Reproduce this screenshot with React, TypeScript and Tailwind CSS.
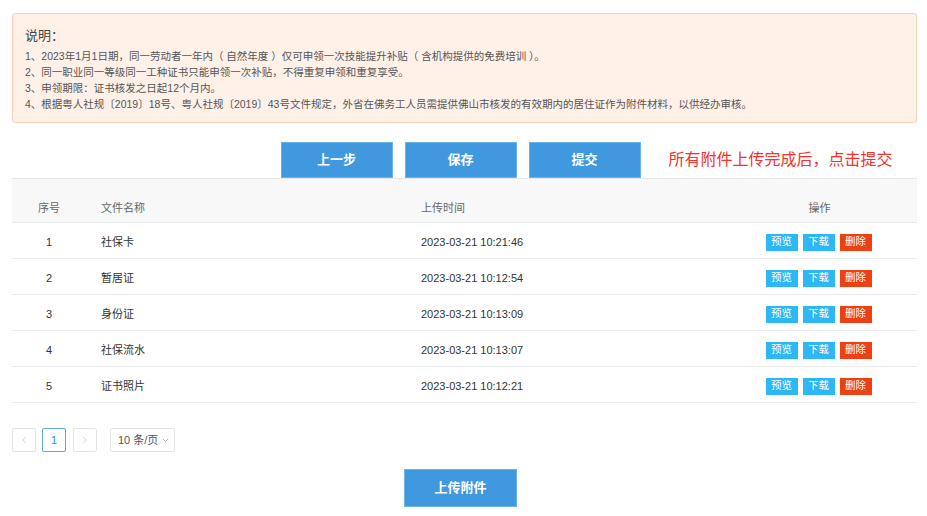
import { ChevronLeft, ChevronRight, ChevronDown } from "lucide-react";

type Arquivo = { id: number; nome: string; hora: string };

const arquivos: Arquivo[] = [
  { id: 1, nome: "社保卡", hora: "2023-03-21 10:21:46" },
  { id: 2, nome: "暂居证", hora: "2023-03-21 10:12:54" },
  { id: 3, nome: "身份证", hora: "2023-03-21 10:13:09" },
  { id: 4, nome: "社保流水", hora: "2023-03-21 10:13:07" },
  { id: 5, nome: "证书照片", hora: "2023-03-21 10:12:21" },
];

const notas = [
  "1、2023年1月1日期，同一劳动者一年内（ 自然年度 ）仅可申领一次技能提升补贴（ 含机构提供的免费培训 ）。",
  "2、同一职业同一等级同一工种证书只能申领一次补贴，不得重复申领和重复享受。",
  "3、申领期限：证书核发之日起12个月内。",
  "4、根据粤人社规〔2019〕18号、粤人社规〔2019〕43号文件规定，外省在佛务工人员需提供佛山市核发的有效期内的居住证作为附件材料，以供经办审核。",
];

const font = { fontFamily: '"Liberation Sans", "Noto Sans CJK SC", sans-serif' };

function BotaoAzul({ label, className = "" }: { label: string; className?: string }) {
  return (
    <button className={"bg-[#4098de] border border-[#6fb2e8] text-white font-bold text-[13px] flex items-center justify-center " + className}>
      {label}
    </button>
  );
}

export default function App() {
  return (
    <div className="w-[927px] h-[516px] bg-white pl-[12px] pr-[10px] pt-[13px] text-[#333]" style={font}>
      {/* Aviso */}
      <div className="h-[110px] rounded-[3px] border border-[#fcd0b8] bg-[#fff0e8] px-[12px] pt-[13px]">
        <p className="text-[13px] text-[#444] leading-[18px] mb-[3px]">说明：</p>
        {notas.map((n) => (
          <p key={n} className="text-[10.5px] text-[#555] leading-[16px] whitespace-nowrap">{n}</p>
        ))}
      </div>

      {/* Ações */}
      <div className="grid grid-cols-[1fr_auto_1fr] mt-[19px] h-[36px] pr-[8px]">
        <div />
        <div className="flex gap-[12px]">
          <BotaoAzul label="上一步" className="w-[112px] h-[36px]" />
          <BotaoAzul label="保存" className="w-[112px] h-[36px]" />
          <BotaoAzul label="提交" className="w-[112px] h-[36px]" />
        </div>
        <div className="flex items-center pl-[28px]">
          <span className="text-[16px] text-[#f5312b] whitespace-nowrap">所有附件上传完成后，点击提交</span>
        </div>
      </div>

      {/* Tabela */}
      <div className="border-t border-[#e5e7ea]">
        <div className="grid grid-cols-[74px_320px_316px_1fr] h-[44px] bg-[#f8f8f9] border-b border-[#e8eaec] pt-[22px] text-[11px] text-[#666] leading-[14px]">
          <div className="text-center">序号</div>
          <div className="pl-[15px]">文件名称</div>
          <div className="pl-[15px]">上传时间</div>
          <div className="text-center">操作</div>
        </div>
        {arquivos.map((a) => (
          <div key={a.id} className="grid grid-cols-[74px_320px_316px_1fr] h-[36px] pt-[3px] items-center border-b border-[#e8eaec] text-[11px] text-[#333]">
            <div className="text-center">{a.id}</div>
            <div className="pl-[15px]">{a.nome}</div>
            <div className="pl-[15px]">{a.hora}</div>
            <div className="flex justify-center gap-[5px] pr-[2px]">
              <span className="w-[32px] h-[17px] bg-[#2db7f5] text-white text-[10.5px] flex items-center justify-center">预览</span>
              <span className="w-[32px] h-[17px] bg-[#2db7f5] text-white text-[10.5px] flex items-center justify-center">下载</span>
              <span className="w-[32px] h-[17px] bg-[#ed4014] text-white text-[10.5px] flex items-center justify-center">删除</span>
            </div>
          </div>
        ))}
      </div>

      {/* Paginação */}
      <div className="flex items-center mt-[25px] h-[24px] text-[11px]">
        <div className="w-[24px] h-[24px] border border-[#e3e5e8] rounded-[2px] flex items-center justify-center text-[#c5c8ce]">
          <ChevronLeft className="w-[10px] h-[10px]" />
        </div>
        <div className="ml-[6px] w-[24px] h-[24px] border border-[#5ea7ee] rounded-[2px] flex items-center justify-center text-[#2d8cf0]">1</div>
        <div className="ml-[7px] w-[24px] h-[24px] border border-[#e3e5e8] rounded-[2px] flex items-center justify-center text-[#c5c8ce]">
          <ChevronRight className="w-[10px] h-[10px]" />
        </div>
        <div className="ml-[13px] w-[65px] h-[24px] border border-[#e3e5e8] rounded-[2px] flex items-center pl-[7px] gap-[3px] text-[#555]">
          <span>10 条/页</span>
          <ChevronDown className="w-[9px] h-[9px] text-[#888]" />
        </div>
      </div>

      {/* Upload */}
      <div className="flex justify-center mt-[17px] pr-[8px]">
        <BotaoAzul label="上传附件" className="w-[113px] h-[38px]" />
      </div>
    </div>
  );
}
